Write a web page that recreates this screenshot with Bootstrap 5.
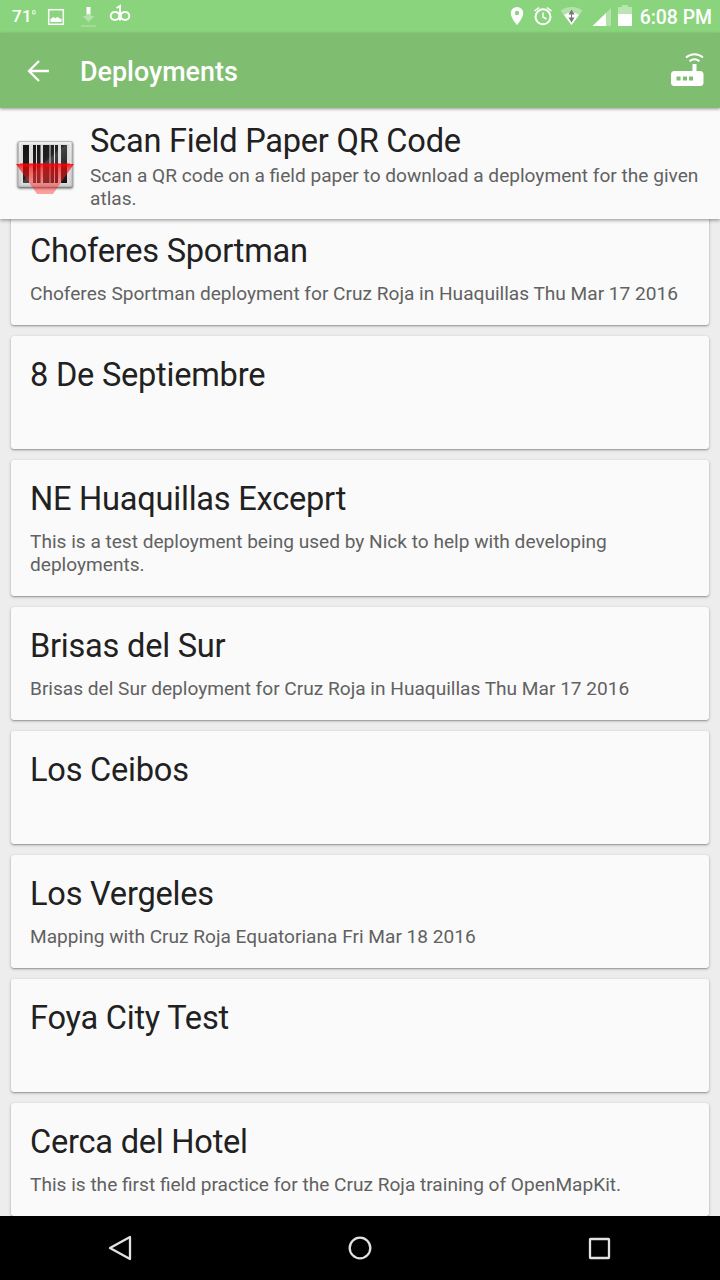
<!DOCTYPE html>
<html lang="en">
<head>
<meta charset="utf-8">
<meta name="viewport" content="width=device-width, initial-scale=1">
<title>Deployments</title>
<link href="https://cdn.jsdelivr.net/npm/bootstrap@5.3.0/dist/css/bootstrap.min.css" rel="stylesheet">
<style>
body{font-family:Roboto,"Liberation Sans",sans-serif;background:#ededed;color:#212121;overflow:hidden}
.app-screen{height:1280px;width:720px}
svg{display:block;flex:none}
.status-bar{height:33px;background:#8bd47e;color:#fff;padding:0 8px 0 12px}
.status-temp{font-size:17px;font-weight:500;line-height:35px;width:35px;letter-spacing:.4px}
.status-time{font-size:19.400px;font-weight:500;line-height:34px;margin-left:7px;padding-top:2px;white-space:nowrap}
.app-bar{height:75px;background:#7fbd71;color:#fff;padding:0 14px 0 26px;box-shadow:0 1px 3px rgba(0,0,0,.4);z-index:3}
.app-title{font-size:26.900px;font-weight:500;line-height:40px;margin-left:30px;padding-top:2px;white-space:nowrap}
.scan-panel{height:111px;background:#fafafa;padding:13px 15px 0 14px;box-shadow:0 1px 4px rgba(0,0,0,.45);z-index:2}
.scan-icon{margin-top:16px;margin-right:14px}
.item-title{font-size:32.600px;letter-spacing:-.24px;line-height:40px;font-weight:400;margin:0;white-space:nowrap}
.item-text{font-size:19.100px;line-height:23px;color:#616161;margin:0}
.scan-panel .item-text{margin-top:3px}
.deploy-list{padding:0 11px;margin-top:-7px;gap:11px;min-height:0}
.deploy-card{flex:none;min-height:113px;background:#fafafa;border:0;border-radius:3px;padding:19px 19px 20px;box-shadow:0 1px 3px rgba(0,0,0,.3),0 1px 1px rgba(0,0,0,.15)}
.deploy-card .item-text{margin-top:11px}
.nav-keys{height:64px;background:#000;z-index:4}
</style>
</head>
<body>
<div class="app-screen d-flex flex-column overflow-hidden">
  <header class="status-bar d-flex align-items-center flex-shrink-0">
    <span class="status-temp">71<svg class="d-inline-block align-top" style="margin-top:11px" width="4" height="5" viewBox="0 0 4 5"><path d="M.7.7h2.400v3.300H.7z" fill="none" stroke="#fff" stroke-opacity=".8"/></svg></span>
    <svg width="88" height="33" viewBox="47 0 88 33" fill="none">
      <rect x="48.700" y="9.700" width="14.600" height="14.600" stroke="#fff" stroke-width="1.500"/>
      <path d="M50.500 22v-3l3-2 2 1.200 2-1.500 2 1.800 2 .2V22z" fill="#fff"/>
      <path d="M86.500 7h4v7h-4z" fill="#fff"/><path d="M86 14h5v2h3.500L88.500 22 82.500 16H86z" fill="#fff" opacity=".35"/><path d="M81 26h15" stroke="#fff" opacity=".4"/>
      <g stroke="#fff" stroke-width="2"><ellipse cx="115" cy="15.900" rx="4.300" ry="4"/><ellipse cx="125" cy="15.900" rx="4.300" ry="4"/><path d="M116.500 8l3.500-2v14.500"/></g>
    </svg>
    <svg class="ms-auto" width="123" height="33" viewBox="510 0 123 33" fill="none">
      <path d="M517 7a6.200 6.200 0 0 0-6.200 6.200c0 4.800 6.200 11.800 6.200 11.800s6.200-7 6.200-11.800A6.200 6.200 0 0 0 517 7z" fill="#fff"/><circle cx="517" cy="13" r="2.200" fill="#8bd47e"/>
      <circle cx="543" cy="16.800" r="7.500" stroke="#fff" stroke-width="2"/><path d="M543 12.500V17l3.500 2M534.500 11l4.500-3.500M551.500 11L547 7.500" stroke="#fff" stroke-width="1.500"/>
      <path d="M560.500 10.500c6-4.700 16-4.700 22 0L571.500 25z" fill="#fff" opacity=".35"/><path d="M564 15c4.500-3.400 10.500-3.400 15 0l-7.500 10z" fill="#fff"/><path d="M571.500 9.500l3 5h-6zM568.500 17.500h6l-3 5z" fill="#777"/><path d="M571.500 13v5" stroke="#777" stroke-width="1"/>
      <path d="M611 8v18h-5V13z" fill="#fff" opacity=".35"/><path d="M592.500 26L606 13v13z" fill="#fff"/>
      <path d="M618 7h4V5h6v2h4v7h-14z" fill="#fff" opacity=".4"/><path d="M618 14h14v12h-14z" fill="#fff"/>
    </svg>
    <span class="status-time">6:08 PM</span>
  </header>
  <nav class="app-bar d-flex align-items-center flex-shrink-0 position-relative">
    <svg width="24" height="24" viewBox="26 59 24 24" fill="none"><path d="M49 71H29M39 61L29 71l10 10" stroke="#fff" stroke-width="2.300"/></svg>
    <h1 class="app-title mb-0">Deployments</h1>
    <svg class="ms-auto" width="36" height="38" viewBox="670 52 36 38" fill="none">
      <path d="M674.500 71H692.500v-7h4v7h3.500a3.500 3.500 0 0 1 3.500 3.500v8a3.500 3.500 0 0 1-3.500 3.500h-25.500a3.500 3.500 0 0 1-3.500-3.500v-8a3.500 3.500 0 0 1 3.500-3.500z" fill="#fff"/>
      <path d="M676.500 76.500h4v4h-4zM683 76.500h4v4h-4zM689 76.500h4v4h-4z" fill="#7fbd71"/>
      <path d="M686 57.500c5-4.500 12-4.500 17 0M689.500 61.300c3-2.500 7-2.500 10 0" stroke="#fff" stroke-width="2"/>
    </svg>
  </nav>
  <section class="scan-panel d-flex flex-shrink-0 position-relative">
    <svg class="scan-icon" width="62" height="60" viewBox="14 137 62 60">
      <defs>
        <linearGradient id="frame" x2="0" y2="1"><stop stop-color="#eee"/><stop offset="1" stop-color="#ccc"/></linearGradient>
        <linearGradient id="bars" x2="1" y2="1"><stop stop-color="#111"/><stop offset=".45" stop-color="#222"/><stop offset=".5" stop-color="#444"/><stop offset="1" stop-color="#111"/></linearGradient>
        <linearGradient id="beam" gradientUnits="userSpaceOnUse" x1="0" x2="0" y1="163" y2="194"><stop stop-color="#f00" stop-opacity=".9"/><stop offset=".18" stop-color="#f00" stop-opacity=".62"/><stop offset=".6" stop-color="#f22" stop-opacity=".46"/><stop offset="1" stop-color="#f22" stop-opacity=".42"/></linearGradient>
        <filter id="soft" x="-20%" y="-20%" width="140%" height="140%"><feGaussianBlur stdDeviation="1.200"/></filter>
      </defs>
      <rect x="17.500" y="142" width="55.500" height="46.500" rx="2" fill="#333" opacity=".75" filter="url(#soft)"/>
      <rect x="18.500" y="141.500" width="53.500" height="45" rx="1.500" fill="url(#frame)" stroke="#bbb"/>
      <rect x="21" y="144" width="48.500" height="40.500" fill="#ddd"/>
      <path d="M23 145h6v38h-6zM33 145h3v38h-3zM37 145h3.500v38H37zM43 145h6.500v38H43zM50.500 145h3.500v38h-3.500zM55 145h3v38h-3zM61 145h6v38h-6z" fill="url(#bars)"/>
      <path d="M16 164h58L53 194H37z" fill="url(#beam)"/>
      <path d="M20 164h50" stroke="#f00" stroke-width="1.500" opacity=".6"/>
    </svg>
    <div>
      <h2 class="item-title">Scan Field Paper QR Code</h2>
      <p class="item-text">Scan a QR code on a field paper to download a deployment for the given atlas.</p>
    </div>
  </section>
  <main class="deploy-list d-flex flex-column flex-grow-1 overflow-hidden">
    <article class="card deploy-card"><h2 class="item-title">Choferes Sportman</h2><p class="item-text">Choferes Sportman deployment for Cruz Roja in Huaquillas Thu Mar 17 2016</p></article>
    <article class="card deploy-card"><h2 class="item-title">8 De Septiembre</h2></article>
    <article class="card deploy-card"><h2 class="item-title">NE Huaquillas Exceprt</h2><p class="item-text">This is a test deployment being used by Nick to help with developing deployments.</p></article>
    <article class="card deploy-card"><h2 class="item-title">Brisas del Sur</h2><p class="item-text">Brisas del Sur deployment for Cruz Roja in Huaquillas Thu Mar 17 2016</p></article>
    <article class="card deploy-card"><h2 class="item-title">Los Ceibos</h2></article>
    <article class="card deploy-card"><h2 class="item-title">Los Vergeles</h2><p class="item-text">Mapping with Cruz Roja Equatoriana Fri Mar 18 2016</p></article>
    <article class="card deploy-card"><h2 class="item-title">Foya City Test</h2></article>
    <article class="card deploy-card"><h2 class="item-title">Cerca del Hotel</h2><p class="item-text">This is the first field practice for the Cruz Roja training of OpenMapKit.</p></article>
  </main>
  <footer class="nav-keys d-flex justify-content-around align-items-center flex-shrink-0 position-relative">
    <svg width="30" height="30" viewBox="0 0 30 30" fill="none"><path d="M25 4v22L5 15z" stroke="#e2e2e2" stroke-width="2.300" stroke-linejoin="round"/></svg>
    <svg width="30" height="30" viewBox="0 0 30 30" fill="none"><circle cx="15" cy="15" r="10.300" stroke="#e2e2e2" stroke-width="2.300"/></svg>
    <svg width="30" height="30" viewBox="0 0 30 30" fill="none"><rect x="5" y="6" width="19" height="19" rx=".5" stroke="#e2e2e2" stroke-width="2.300"/></svg>
  </footer>
</div>
<script src="https://cdn.jsdelivr.net/npm/bootstrap@5.3.0/dist/js/bootstrap.bundle.min.js"></script>
</body>
</html>
